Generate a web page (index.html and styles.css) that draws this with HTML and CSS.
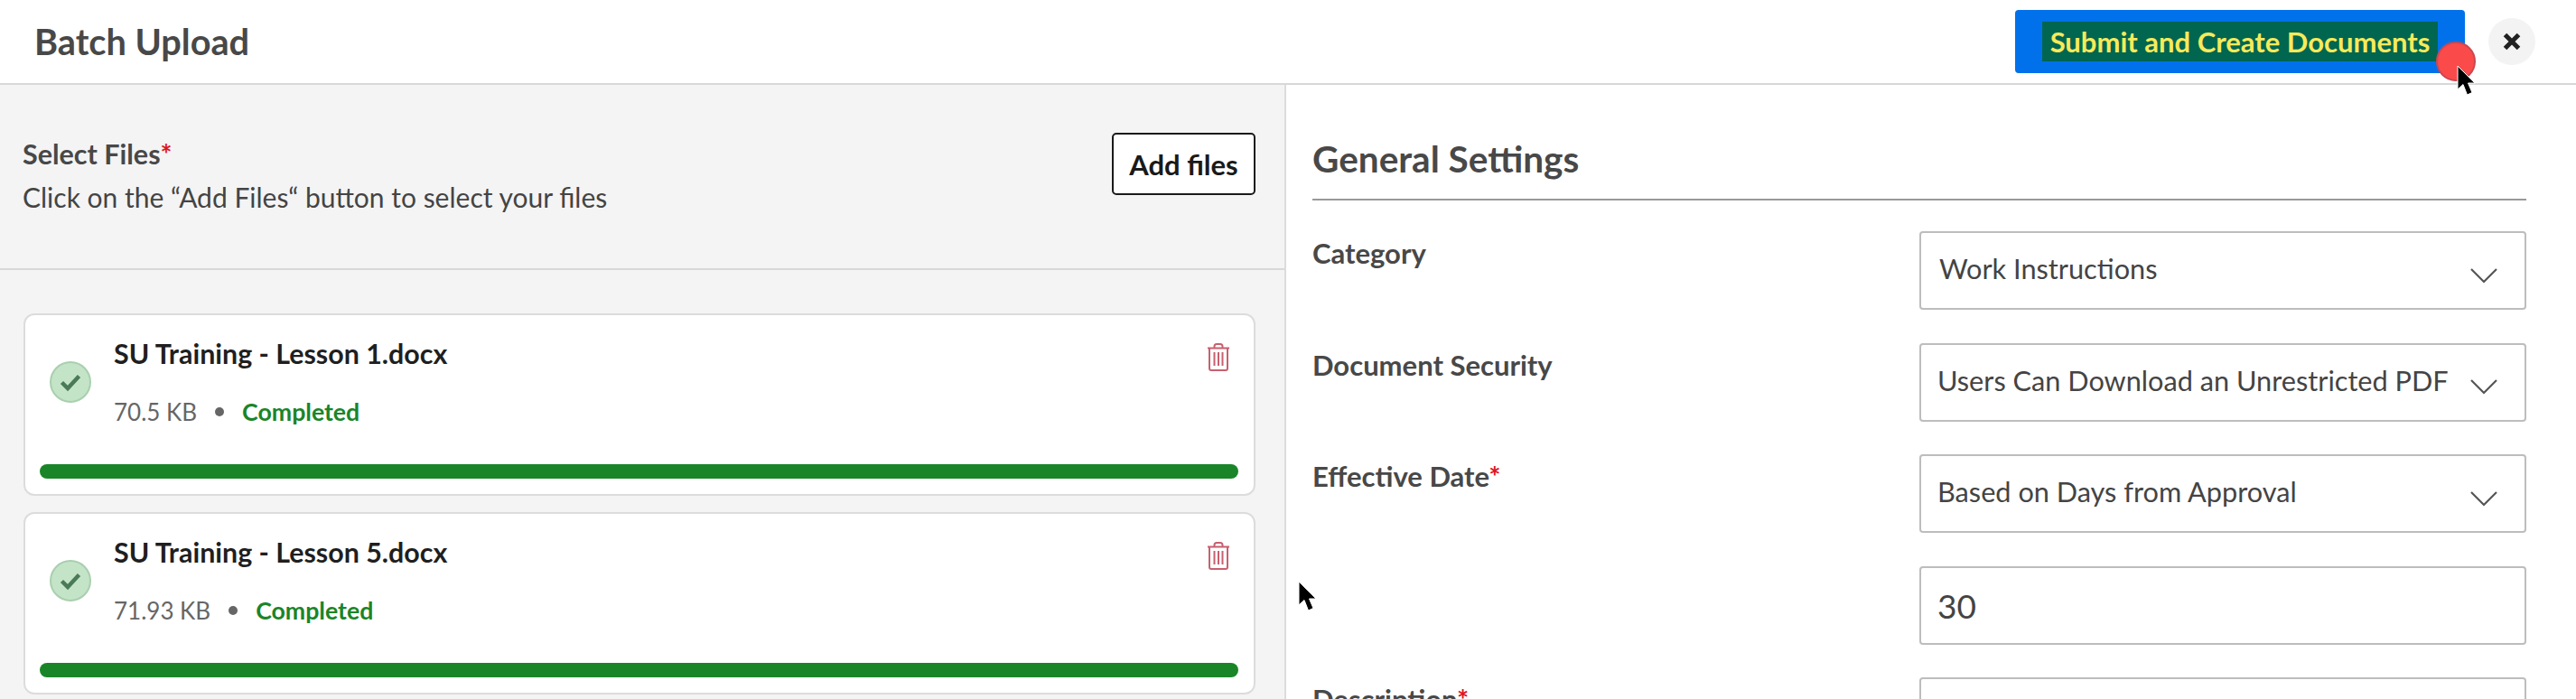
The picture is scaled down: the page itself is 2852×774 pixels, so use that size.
FILE: index.html
```html
<!DOCTYPE html>
<html lang="en">
<head>
<meta charset="utf-8">
<title>Batch Upload</title>
<link rel="stylesheet" href="styles.css">
</head>
<body>
<div class="app">
  <header class="topbar">
    <h1 class="title">Batch Upload</h1>
    <div class="actions">
      <button class="submit"><span class="hl">Submit and Create Documents</span></button>
      <button class="close" aria-label="Close">
        <svg viewBox="0 0 20 20" width="20" height="20"><path d="M2.500 2.500L17.500 17.500M17.500 2.500L2.500 17.500" stroke="#222" stroke-width="5" fill="none"/></svg>
      </button>
    </div>
  </header>
  <main class="split">
    <section class="left">
      <div class="select">
        <div class="select-text">
          <div class="label">Select Files<span class="req">*</span></div>
          <div class="hint">Click on the “Add Files“ button to select your files</div>
        </div>
        <button class="add">Add files</button>
      </div>
      <div class="files">
        <article class="card">
          <div class="card-top">
            <span class="check"><svg viewBox="0 0 24 24" width="26" height="24"><path d="M2.500 12.500L9 19L21.500 5.500" stroke="#4b7a57" stroke-width="4.500" fill="none"/></svg></span>
            <div class="info">
              <div class="name">SU Training - Lesson 1.docx</div>
              <div class="meta"><span>70.5 KB</span><i class="dot"></i><b class="done">Completed</b></div>
            </div>
            <svg class="trash" viewBox="0 0 26 31" width="26" height="31"><path d="M1 5.500H25M8.500 5V3.500C8.500 2 9.500 1 11 1H15C16.500 1 17.500 2 17.500 3.500V5M3 6V28C3 29.200 3.800 30 5 30H21C22.200 30 23 29.200 23 28V6M8.500 10V25M13 10V25M17.500 10V25" stroke="#c8606f" stroke-width="2" fill="none"/></svg>
          </div>
          <div class="bar"></div>
        </article>
        <article class="card">
          <div class="card-top">
            <span class="check"><svg viewBox="0 0 24 24" width="26" height="24"><path d="M2.500 12.500L9 19L21.500 5.500" stroke="#4b7a57" stroke-width="4.500" fill="none"/></svg></span>
            <div class="info">
              <div class="name">SU Training - Lesson 5.docx</div>
              <div class="meta"><span>71.93 KB</span><i class="dot"></i><b class="done">Completed</b></div>
            </div>
            <svg class="trash" viewBox="0 0 26 31" width="26" height="31"><path d="M1 5.500H25M8.500 5V3.500C8.500 2 9.500 1 11 1H15C16.500 1 17.500 2 17.500 3.500V5M3 6V28C3 29.200 3.800 30 5 30H21C22.200 30 23 29.200 23 28V6M8.500 10V25M13 10V25M17.500 10V25" stroke="#c8606f" stroke-width="2" fill="none"/></svg>
          </div>
          <div class="bar"></div>
        </article>
      </div>
    </section>
    <section class="right">
      <h2 class="section">General Settings</h2>
      <div class="form">
        <div class="flabel">Category</div>
        <div class="field select-field wi"><span>Work Instructions</span><svg class="chev" viewBox="0 0 30 18" width="30" height="18"><path d="M1 2L15 16L29 2" stroke="#555" stroke-width="2.200" fill="none"/></svg></div>
        <div class="flabel">Document Security</div>
        <div class="field select-field"><span>Users Can Download an Unrestricted PDF</span><svg class="chev" viewBox="0 0 30 18" width="30" height="18"><path d="M1 2L15 16L29 2" stroke="#555" stroke-width="2.200" fill="none"/></svg></div>
        <div class="flabel">Effective Date<span class="req">*</span></div>
        <div class="field select-field"><span>Based on Days from Approval</span><svg class="chev" viewBox="0 0 30 18" width="30" height="18"><path d="M1 2L15 16L29 2" stroke="#555" stroke-width="2.200" fill="none"/></svg></div>
        <div class="flabel"></div>
        <div class="field num"><span>30</span></div>
        <div class="flabel">Description<span class="req">*</span></div>
        <div class="field"></div>
      </div>
    </section>
  </main>
</div>
<div class="click-dot"></div>
<svg class="cursor cursor-a" viewBox="0 0 24 38" width="24" height="38"><path d="M2 1V27L8 21.500L12.500 33L18 30.500L13.500 20H21Z" fill="#000" stroke="#fff" stroke-width="1"/></svg>
<svg class="cursor cursor-b" viewBox="0 0 24 38" width="24" height="38"><path d="M2 1V27L8 21.500L12.500 33L18 30.500L13.500 20H21Z" fill="#000" stroke="#fff" stroke-width="1"/></svg>
</body>
</html>
```
FILE: styles.css
```css
* { box-sizing: border-box; }
html, body { margin: 0; height: 774px; overflow: hidden; background: #fff; }
body { font-family: Lato, "Open Sans", sans-serif; color: #444; position: relative; }
button { font-family: inherit; cursor: pointer; }
.app { display: flex; flex-direction: column; height: 774px; overflow: hidden; }

.topbar { flex: none; height: 94px; border-bottom: 2px solid #d8d8d8; display: flex; align-items: flex-start; justify-content: space-between; padding: 0 45px 0 38px; }
.title { margin: 0; padding-top: 22px; font-size: 39.700px; line-height: 48px; font-weight: 700; color: #484848; }
.actions { display: flex; align-items: flex-start; padding-top: 11px; gap: 26px; }
.submit { width: 498px; height: 70px; background: #0071eb; border: 0; border-radius: 4px; display: flex; align-items: flex-start; justify-content: center; padding: 13px 0 0; }
.hl { display: block; background: #006650; color: #f7ea5a; font-size: 31px; line-height: 44px; font-weight: 700; padding: 0 9px; white-space: nowrap; }
.close { width: 52px; height: 52px; margin-top: 9px; border-radius: 50%; border: 0; background: #f3f3f3; display: flex; align-items: center; justify-content: center; padding: 0; }

.split { flex: 1; display: flex; min-height: 0; }
.left { width: 1424px; flex: none; background: #f4f4f4; border-right: 2px solid #dcdcdc; }
.select { height: 205px; border-bottom: 2px solid #d8d8d8; display: flex; justify-content: space-between; align-items: flex-start; padding: 53px 32px 0 25px; }
.label { font-size: 30.500px; line-height: 36px; font-weight: 700; color: #484848; margin-top: 5px; }
.hint { font-size: 30px; line-height: 36px; margin-top: 12px; color: #444; }
.req { color: #e0141e; }
.add { width: 159px; height: 69px; background: #fff; border: 2px solid #1a1a1a; border-radius: 5px; font-size: 31px; font-weight: 700; color: #1a1a1a; padding: 0; }

.files { padding: 48px 32px 0 26px; display: flex; flex-direction: column; gap: 18px; }
.card { height: 202px; background: #fff; border: 2px solid #dcdcdc; border-radius: 12px; padding: 0 17px 0 16px; }
.card-top { display: flex; height: 165px; }
.check { flex: none; width: 46px; height: 46px; margin: 51px 0 0 11px; border-radius: 50%; background: #c4e4c8; border: 2px solid #a9cfae; display: flex; align-items: center; justify-content: center; }
.info { flex: 1; padding: 22px 0 0 25px; }
.name { font-size: 30.400px; line-height: 40px; font-weight: 700; color: #1f1f1f; }
.meta { display: flex; align-items: center; font-size: 26px; line-height: 34px; margin-top: 28px; color: #666; }
.dot { width: 10px; height: 10px; border-radius: 50%; background: #666; margin: 0 20px; }
.done { color: #1a8528; font-weight: 700; font-size: 26.700px; }
.trash { flex: none; margin: 31px 9px 0 0; }
.bar { height: 16px; border-radius: 8px; background: #1a8528; }

.right { flex: 1; padding: 0 55px 0 30px; min-width: 0; }
.section { margin: 0 0 0 -1px; height: 128px; border-bottom: 2px solid #999; font-size: 40.500px; line-height: 46px; font-weight: 700; color: #484848; padding-top: 59px; }
.form { display: grid; grid-template-columns: 1fr 672px; grid-auto-rows: 87px; row-gap: 36.500px; padding-top: 34px; }
.flabel { font-size: 31px; line-height: 36px; font-weight: 700; color: #484848; padding-top: 6px; margin-left: -1px; }
.field { border: 2px solid #bdbdbd; border-radius: 4px; background: #fff; display: flex; align-items: center; justify-content: space-between; font-size: 30.700px; padding: 0 30px 4px 18px; color: #444; white-space: nowrap; }
.wi { padding-left: 20px; }
.chev { flex: none; margin-top: 14px; }
.num { font-size: 37px; padding-bottom: 0; }

.click-dot { position: absolute; left: 2697px; top: 46px; width: 44px; height: 44px; border-radius: 50%; background: #fb4a4a; border: 2px solid #c9474f; }
.cursor { position: absolute; }
.cursor-a { left: 2719px; top: 72px; }
.cursor-b { left: 1436px; top: 643px; }
```
